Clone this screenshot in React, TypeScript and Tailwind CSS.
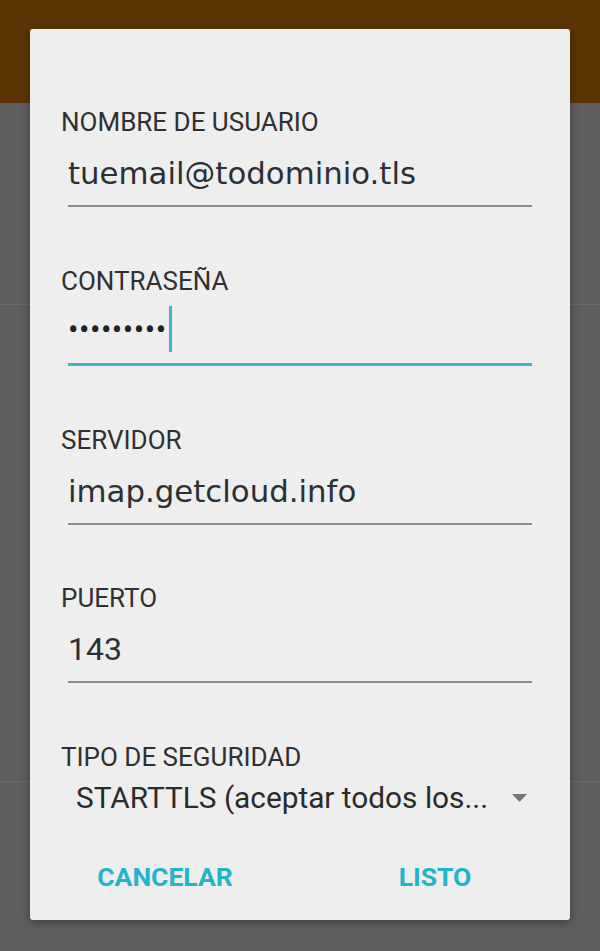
import React from "react";

const labelCls =
  "ml-[31px] h-[30px] leading-[30px] text-[26px] text-[#303030] font-['Roboto',sans-serif]";

function Field({ label, value, mono }: { label: string; value: string; mono?: boolean }) {
  return (
    <div className="flex flex-col">
      <div className={labelCls}>{label}</div>
      <div
        className={
          "ml-[38px] mt-[16px] h-[40px] leading-[40px] text-[#2b3034] whitespace-nowrap " +
          (mono
            ? "text-[32px] font-['Roboto',sans-serif]"
            : "text-[30.8px] font-['DejaVu_Sans',sans-serif]")
        }
      >
        {value}
      </div>
      <div className="ml-[38px] mt-[12px] w-[464px] h-[2px] bg-[#8c8c8c]" />
    </div>
  );
}

export default function App() {
  return (
    <div className="relative w-[600px] h-[951px] overflow-hidden bg-[#5e5e5e]">
      <div className="flex flex-col">
        <div className="h-[103px] bg-[#5b3406]" />
        <div className="h-[202px] border-b border-[#6b6b6b]" />
        <div className="h-[477px] border-b border-[#6b6b6b]" />
      </div>

      <div className="absolute left-[30px] top-[29px] w-[540px] h-[891px] rounded-[3px] bg-[#eeeeee] shadow-[0_2px_8px_rgba(0,0,0,0.35)]">
        <div className="flex flex-col pt-[78px] gap-[58.75px]">
          <Field label="NOMBRE DE USUARIO" value="tuemail@todominio.tls" />

          <div className="flex flex-col">
            <div className={labelCls}>CONTRASEÑA</div>
            <div className="ml-[38px] mt-[16px] h-[40px] flex items-center">
              <span className="text-[31px] leading-[40px] tracking-[0.5px] text-[#222] font-['Roboto',sans-serif] mb-[4px]">
                •••••••••
              </span>
              <span className="ml-[2px] w-[3px] h-[46px] bg-[#3cb8cc] mb-[5px]" />
            </div>
            <div className="ml-[38px] mt-[11px] w-[464px] h-[3px] bg-[#3db6cc]" />
          </div>

          <Field label="SERVIDOR" value="imap.getcloud.info" />
          <Field label="PUERTO" value="143" mono />

          <div className="flex flex-col">
            <div className={labelCls}>TIPO DE SEGURIDAD</div>
            <div className="mt-[8px] h-[36px] flex items-center">
              <span className="ml-[46px] text-[29.8px] leading-[36px] text-[#2b2b2b] font-['Roboto',sans-serif] whitespace-nowrap">
                STARTTLS (aceptar todos los...
              </span>
              <svg
                className="ml-auto mr-[43px]"
                width="15"
                height="8"
                viewBox="0 0 15 8"
              >
                <polygon points="0,0 15,0 7.5,8" fill="#777777" />
              </svg>
            </div>
          </div>
        </div>

        <div className="mt-[46px] flex">
          <div className="flex-1 text-center h-[30px] leading-[30px] text-[26.5px] font-bold text-[#22b5c9] font-['Roboto',sans-serif]">
            CANCELAR
          </div>
          <div className="flex-1 text-center h-[30px] leading-[30px] text-[26.5px] font-bold text-[#22b5c9] font-['Roboto',sans-serif]">
            LISTO
          </div>
        </div>
      </div>
    </div>
  );
}
